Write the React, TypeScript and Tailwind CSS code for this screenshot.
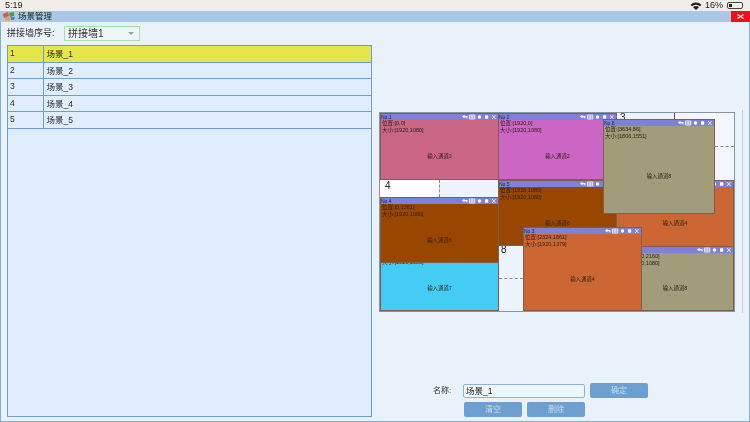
import React from "react";

const CJK = "font-['Liberation_Sans','Noto_Sans_CJK_SC',sans-serif]";

function HeaderIcons() {
  return (
    <svg width="34" height="6" viewBox="0 0 34 6" className="shrink-0">
      <path d="M0 2.6 L2.4 0.8 V2 H5.4 V4.6 H4.4 V3.2 H2.4 V4.4 Z" fill="#fff" />
      <path d="M7.4 1h5.4v4H7.4z M10.1 1v4 M7.4 3h5.4" fill="none" stroke="#fff" strokeWidth="0.8" />
      <circle cx="17.5" cy="3" r="1.7" fill="#fff" />
      <rect x="23" y="1.2" width="3.2" height="3.6" rx="0.8" fill="#fff" />
      <path d="M30 1l3.6 4M33.6 1L30 5" stroke="#fff" strokeWidth="0.8" />
    </svg>
  );
}

function Win({
  pos,
  bg,
  no,
  place,
  size,
  channel,
}: {
  pos: string;
  bg: string;
  no: string;
  place: string;
  size: string;
  channel: string;
}) {
  return (
    <div className={`absolute flex flex-col border border-[#7d5f50] ${pos} ${bg}`}>
      <div className="h-[6px] shrink-0 bg-[#7c82d8] flex items-center justify-between pr-[2px]">
        <span className="text-[5px] leading-none text-[#1c2060]">{no}</span>
        <HeaderIcons />
      </div>
      <div className="pl-[1px] text-[5.5px] leading-[7px] text-[#2b2015]">
        <div>位置:{place}</div>
        <div>大小:{size}</div>
      </div>
      <div className="flex-1 flex items-center justify-center text-[5.4px] text-[#2b2015]">
        {channel}
      </div>
    </div>
  );
}

const rows = ["场景_1", "场景_2", "场景_3", "场景_4", "场景_5"];

export default function App() {
  return (
    <div className={`w-[750px] h-[422px] overflow-hidden flex flex-col bg-[#e9f1fb] text-[#2a2a2a] blur-[0.3px] ${CJK}`}>
      <div className="h-[11px] shrink-0 bg-[#f0eee9] flex items-center justify-between pl-[5px] pr-[7px] text-[9px] text-[#222]">
        <span>5:19</span>
        <div className="flex items-center gap-[3px]">
          <svg width="12" height="8" viewBox="0 0 12 8">
            <path d="M0.5 2.8 A8 8 0 0 1 11.5 2.8 L10 4.3 A6 6 0 0 0 2 4.3 Z M3 5.2 A4.2 4.2 0 0 1 9 5.2 L6 8 Z" fill="#222" />
          </svg>
          <span>16%</span>
          <div className="w-[16px] h-[7px] border-[0.5px] border-[#444] rounded-[2px] p-[1px] ml-[1px]">
            <div className="h-full w-[3px] bg-[#222]" />
          </div>
        </div>
      </div>

      <div className="h-[11px] shrink-0 bg-[#a9c7e6] flex items-center text-[8.5px] text-[#222]">
        <svg width="12" height="9" viewBox="0 0 12 9" className="ml-[3px] mr-[3px]">
          <path d="M0 2 L5 0 L6 4 L1 6 Z" fill="#d9583c" />
          <path d="M6 1 L11 0 L11 4 L7 5 Z" fill="#4d9a4b" />
          <path d="M3 5 L8 5 L7 9 L2 8 Z" fill="#e8a13c" />
          <path d="M8 5 L12 5 L11 8 L8 8 Z" fill="#5b7fc4" />
        </svg>
        <span>场景管理</span>
        <div className="ml-auto w-[19px] h-full bg-[#ee0f22] flex items-center justify-center">
          <svg width="7" height="5" viewBox="0 0 7 5">
            <path d="M0.5 0.5L6.5 4.5M6.5 0.5L0.5 4.5" stroke="#fff" strokeWidth="1.2" />
          </svg>
        </div>
      </div>

      <div className="flex-1 flex min-h-0 border-x border-b border-[#7fb0d2]">
        <div className="w-[371px] shrink-0 pl-[6px] flex flex-col">
          <div className="h-[23px] shrink-0 flex items-center text-[9px]">
            <span className="w-[57px]">拼接墙序号:</span>
            <div className="w-[76px] h-[15px] bg-[#eef4fb] border border-[#a6e0a6] flex items-center justify-between pl-[3px] pr-[4px] text-[10px] text-[#333]">
              <span>拼接墙1</span>
              <span className="w-0 h-0 border-x-[3px] border-x-transparent border-t-[3px] border-t-[#9aa3ad] mr-[1px]" />
            </div>
          </div>
          <div className="h-[372px] bg-[#deecfd] border border-[#6f9ccb]">
            {rows.map((r, i) => (
              <div
                key={r}
                className={`h-[16.5px] flex border-b border-[#6f9ccb] text-[8.5px] ${i === 0 ? "bg-[#e6e64c]" : "bg-[#e0edfc]"}`}
              >
                <div className="w-[35.5px] border-r border-[#6f9ccb] pl-[2px] leading-[14px]">{i + 1}</div>
                <div className="pl-[3px] leading-[16px]">{r}</div>
              </div>
            ))}
          </div>
        </div>

        <div className="flex-1 flex flex-col pl-[8px] relative">
          <div className="relative mt-[91px] w-[354px] h-[198px] bg-[#ecf3fc] shadow-[0_0_0_1px_#8b939e] text-[10px] overflow-hidden">
            <div className="absolute left-0 top-[67px] w-[59px] h-[17px] bg-white" />
            <div className="absolute left-[294px] top-0 w-[60px] h-[67px] bg-[#f3f7fd]" />
            <div className="absolute left-[59px] top-[67px] h-[17px] w-0 border-l border-dashed border-[#8a8a8a]" />
            <div className="absolute left-[294px] top-0 h-[8px] w-0 border-l border-[#555]" />
            <div className="absolute left-[335px] top-[33px] w-[19px] h-0 border-t border-dashed border-[#8a8a8a]" />
            <div className="absolute left-[119px] top-[165px] w-[24px] h-0 border-t border-dashed border-[#8a8a8a]" />
            <div className="absolute left-[5px] top-[66px] leading-[14px] text-[#222]">4</div>
            <div className="absolute left-[240px] top-[-1px] leading-[11px] text-[#222]">3</div>
            <div className="absolute left-[121px] top-[131px] leading-[12px] text-[#222]">8</div>

            <Win pos="left-0 top-0 w-[119px] h-[67px]" bg="bg-[#cc6686]" no="No.1" place="[0,0]" size="[1920,1080]" channel="输入通道3" />
            <Win pos="left-[118px] top-0 w-[119px] h-[67px]" bg="bg-[#cc66c4]" no="No.2" place="[1920,0]" size="[1920,1080]" channel="输入通道2" />
            <Win pos="left-0 top-[132px] w-[119px] h-[66px]" bg="bg-[#44ccf5]" no="No.7" place="[0,2441]" size="[1920,1080]" channel="输入通道7" />
            <Win pos="left-0 top-[84px] w-[119px] h-[66px]" bg="bg-[#994700]" no="No.4" place="[0,1361]" size="[1920,1080]" channel="输入通道6" />
            <Win pos="left-[236px] top-[67px] w-[118px] h-[67px]" bg="bg-[#cc6633]" no="No.6" place="[3840,1080]" size="[1920,1080]" channel="输入通道4" />
            <Win pos="left-[118px] top-[67px] w-[119px] h-[66px]" bg="bg-[#994700]" no="No.5" place="[1920,1080]" size="[1920,1080]" channel="输入通道6" />
            <Win pos="left-[236px] top-[133px] w-[118px] h-[65px]" bg="bg-[#a39c7a]" no="No.9" place="[3840,2160]" size="[1920,1080]" channel="输入通道8" />
            <Win pos="left-[143px] top-[114px] w-[119px] h-[84px]" bg="bg-[#cc6633]" no="No.3" place="[2324,1861]" size="[1920,1379]" channel="输入通道4" />
            <Win pos="left-[223px] top-[6px] w-[112px] h-[95px]" bg="bg-[#a39c7a]" no="No.8" place="[3634,86]" size="[1806,1551]" channel="输入通道8" />
          </div>

          <div className="mt-[72px] pl-[53px] flex items-center text-[8px] h-[15px]">
            <span className="w-[30px] text-[#333]">名称:</span>
            <div className="w-[122px] h-[14px] bg-[#eef5fc] border border-[#8db2d6] rounded-[2px] pl-[2px] text-[8.5px] leading-[12px] text-[#222]">
              场景_1
            </div>
            <button className="ml-[5px] w-[58px] h-[15px] rounded-[2px] bg-[#6d9fd0] text-[#c9dcf0] text-[8px]">确定</button>
          </div>
          <div className="mt-[4px] pl-[84px] flex gap-[5px]">
            <button className="w-[58px] h-[15px] rounded-[2px] bg-[#6d9fd0] text-[#c9dcf0] text-[8px]">清空</button>
            <button className="w-[58px] h-[15px] rounded-[2px] bg-[#6d9fd0] text-[#c9dcf0] text-[8px]">删除</button>
          </div>
          <div className="absolute left-[370px] top-[88px] h-[203px] w-[1px] bg-[#bcd0e6]" />
        </div>
      </div>
    </div>
  );
}
